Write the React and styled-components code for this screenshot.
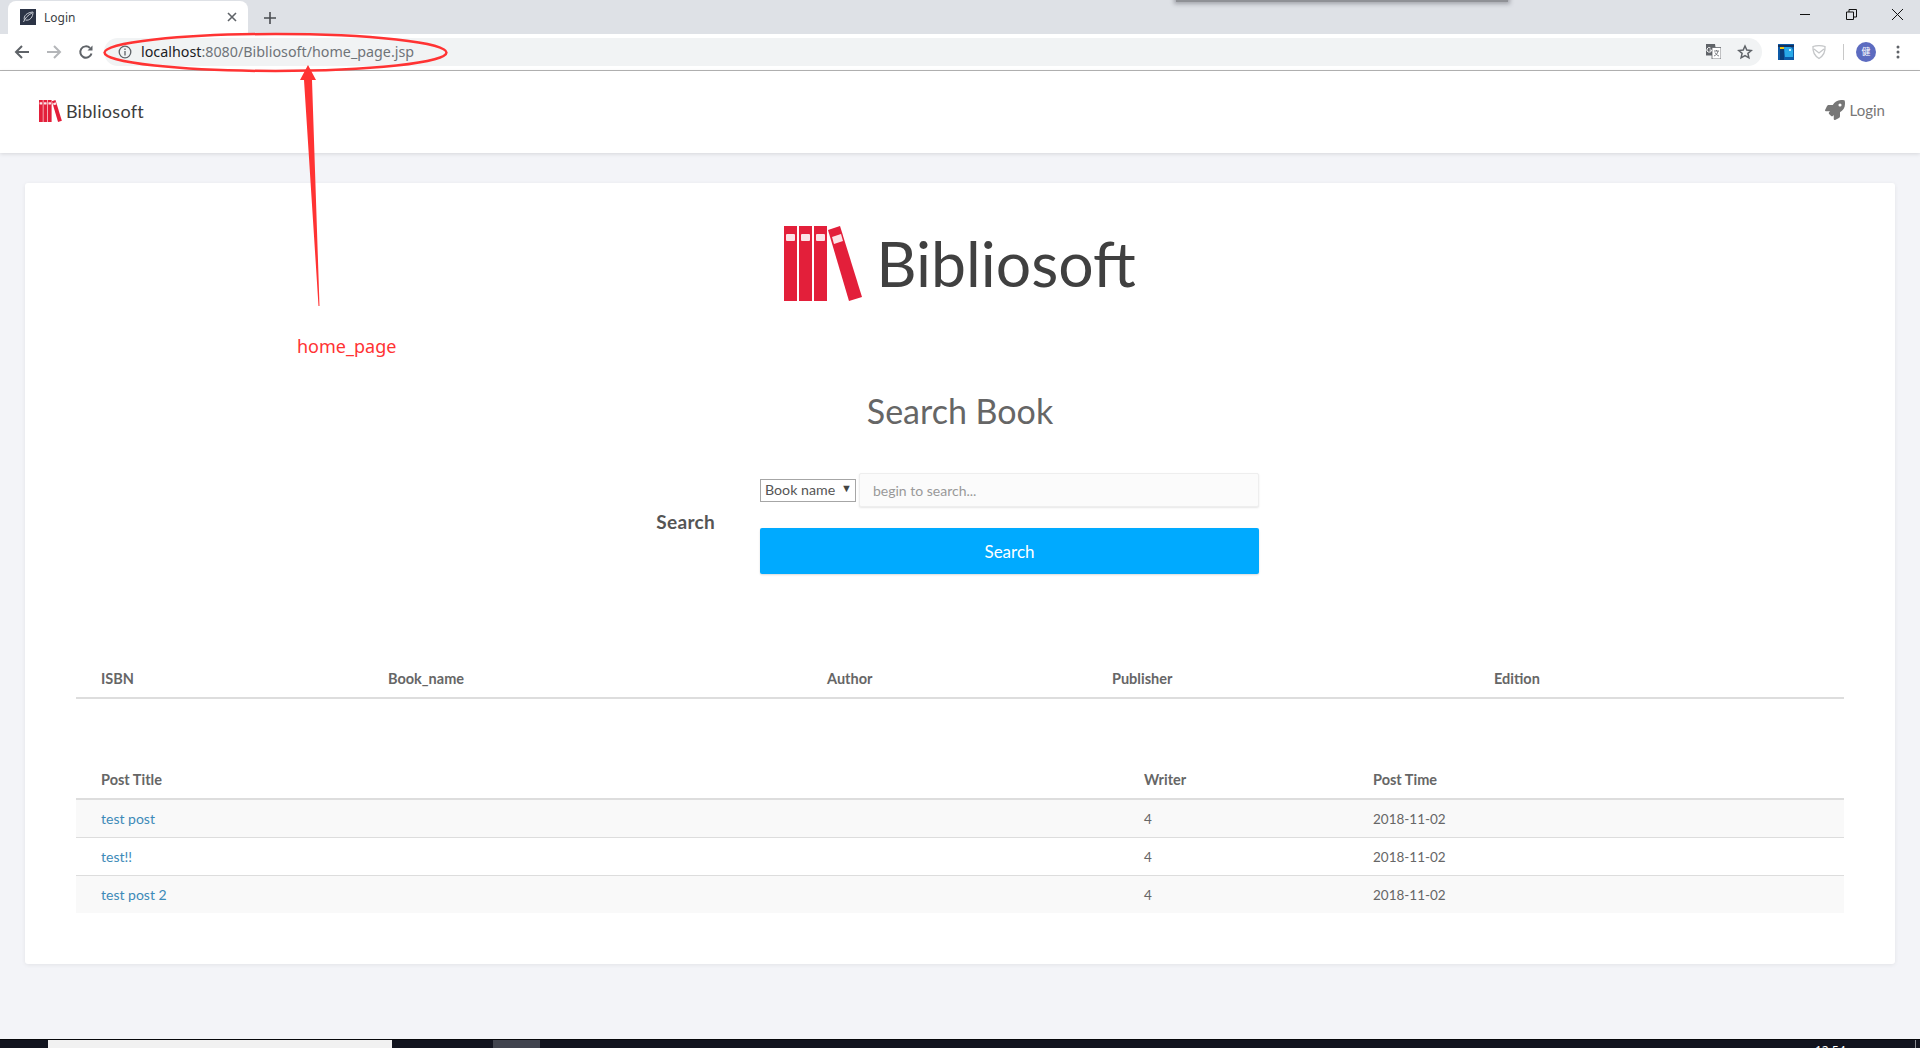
import React from 'react'
import styled, { createGlobalStyle } from 'styled-components'
import { FaRocket } from 'react-icons/fa'

const GlobalStyle = createGlobalStyle`
  html, body { margin: 0; padding: 0; height: 100%; }
  body { background: #f3f4f8; font-family: Lato, "Noto Sans", sans-serif; overflow: hidden; }
  * { box-sizing: border-box; }
`

const Page = styled.div`
  position: relative;
  display: flex;
  flex-direction: column;
  height: 100vh;
  overflow: hidden;
`

/* browser frame */
const TabStrip = styled.div`
  position: relative;
  flex: 0 0 34px;
  display: flex;
  align-items: flex-end;
  padding-left: 8px;
  background: #dee1e6;
`
const Tab = styled.div`
  display: flex;
  align-items: center;
  width: 240px;
  height: 33px;
  padding: 0 10px 1px 12px;
  background: #fff;
  border-radius: 8px 8px 0 0;
  color: #3c4043;
  font: 12px "Noto Sans", sans-serif;
`
const TabTitle = styled.span`
  flex: 1;
  margin-left: 8px;
`
const Favicon = styled.span`
  display: flex;
  align-items: center;
  justify-content: center;
  width: 16px;
  height: 16px;
  background: #2c3446;
`
const NewTab = styled.span`
  display: flex;
  margin-left: 15px;
  margin-bottom: 9px;
`
const WindowShadow = styled.div`
  position: absolute;
  left: 1176px;
  top: -4px;
  width: 332px;
  height: 6px;
  background: #8f9196;
  box-shadow: 0 0 4px 2px rgba(70, 70, 80, 0.4);
`
const WindowControls = styled.div`
  display: flex;
  align-items: center;
  gap: 35px;
  margin-left: auto;
  margin-right: 17px;
  height: 28px;
  align-self: flex-start;
`
const Toolbar = styled.div`
  flex: 0 0 37px;
  display: flex;
  align-items: center;
  padding: 0 0 1px 14px;
  background: #fff;
  border-bottom: 1px solid #b4b4b4;
`
const NavIcon = styled.span`
  display: flex;
  width: 16px;
  margin-right: 16px;
`
const Omnibox = styled.div`
  display: flex;
  align-items: center;
  flex: 0 0 1658px;
  height: 28px;
  margin-left: -6px;
  padding: 0 9px 0 14px;
  background: #f1f3f4;
  border-radius: 14px;
  font: 14.3px "Noto Sans", sans-serif;
`
const UrlHost = styled.span`
  margin-left: 9px;
  color: #202124;
`
const UrlPath = styled.span`
  color: #6f7479;
`
const OmniActions = styled.div`
  display: flex;
  align-items: center;
  gap: 16px;
  margin-left: auto;
`
const Extensions = styled.div`
  display: flex;
  align-items: center;
  margin-left: 16px;
`
const ShieldSlot = styled.span`
  display: flex;
  width: 16px;
  margin-left: 17px;
`
const Divider = styled.span`
  width: 1px;
  height: 16px;
  margin: 0 12px 0 16px;
  background: #c8c8c8;
`
const Avatar = styled.span`
  display: flex;
  align-items: center;
  justify-content: center;
  width: 20px;
  height: 20px;
  border-radius: 50%;
  background: #5c6bc0;
  color: #fff;
  font: 9px "Noto Sans CJK SC", sans-serif;
`
const Dots = styled.span`
  display: flex;
  margin-left: 20px;
`

/* site */
const Navbar = styled.header`
  position: relative;
  flex: 0 0 82px;
  display: flex;
  align-items: center;
  justify-content: space-between;
  padding: 0 35px 2px 39px;
  background: #fff;
  box-shadow: 0 1px 4px rgba(0, 0, 0, 0.12);
`
const Brand = styled.div`
  display: flex;
  align-items: center;
  gap: 4px;
  color: #3d3d3d;
  font-size: 18px;
  letter-spacing: 0.3px;
`
const LoginLink = styled.a`
  display: flex;
  align-items: center;
  gap: 5px;
  margin-bottom: 2px;
  color: #777;
  font-size: 15px;
`
const Main = styled.main`
  flex: 1;
  padding: 30px 25px 0;
`
const Card = styled.section`
  height: 781px;
  padding: 42px 51px 0;
  background: #fff;
  border-radius: 3px;
  box-shadow: 0 1px 4px rgba(0, 0, 0, 0.07);
`
const HeroLogo = styled.div`
  display: flex;
  align-items: center;
  justify-content: center;
  gap: 14px;
  height: 76px;
  color: #404040;
  font-size: 62.5px;
  line-height: 78px;
`
const Heading = styled.h2`
  margin: 87px 0 0;
  color: #666;
  font-size: 34px;
  font-weight: 400;
  line-height: 46px;
  text-align: center;
`
const SearchForm = styled.form`
  display: grid;
  grid-template-columns: 639px 499px;
  column-gap: 45px;
  margin-top: 39px;
`
const SearchLabel = styled.label`
  align-self: center;
  margin-bottom: 5px;
  color: #555;
  font-size: 19px;
  font-weight: 700;
  letter-spacing: 0.3px;
  text-align: right;
`
const Controls = styled.div`
  display: flex;
  flex-direction: column;
  gap: 21px;
`
const ControlRow = styled.div`
  display: flex;
  align-items: center;
  gap: 3px;
`
const FieldSelect = styled.div`
  position: relative;
  width: 96px;
  height: 23px;
  padding-left: 4px;
  background: #fff;
  border: 1px solid #a6a6a6;
  color: #555;
  font-size: 14.2px;
  line-height: 20px;
  &::after {
    content: '▼';
    position: absolute;
    right: 3px;
    top: -2px;
    font-size: 11px;
    color: #444;
  }
`
const SearchInput = styled.input`
  width: 400px;
  height: 34px;
  padding: 0 13px;
  background: #fbfbfb;
  border: 1px solid #eee;
  border-radius: 2px;
  box-shadow: 0 1px 2px rgba(0, 0, 0, 0.1);
  font: 14px Lato, sans-serif;
  &::placeholder { color: #999; }
`
const SearchButton = styled.button`
  height: 46px;
  background: #00aaff;
  border: 0;
  border-radius: 2px;
  box-shadow: 0 1px 2px rgba(0, 0, 0, 0.15);
  color: #fff;
  font: 17px Lato, sans-serif;
`
const Table = styled.table`
  width: 100%;
  margin-top: ${p => p.$top}px;
  border-collapse: collapse;
  table-layout: fixed;
  font-size: 13.5px;
  color: #666;
`
const Col = styled.col`
  width: ${p => p.$w}px;
`
const Th = styled.th`
  height: 38px;
  padding: 0 25px;
  border-bottom: 2px solid #ddd;
  color: #666;
  font-size: 14.5px;
  font-weight: 700;
  text-align: left;
`
const Tr = styled.tr`
  background: ${p => (p.$odd ? '#f9f9f9' : '#fff')};
`
const Td = styled.td`
  height: 38px;
  padding: 1px 25px 0;
  border-top: ${p => (p.$first ? '0' : '1px solid #ddd')};
`
const PostLink = styled.a`
  color: #3d8ab8;
  font-size: 14px;
`
const Taskbar = styled.footer`
  position: relative;
  flex: 0 0 9px;
  display: flex;
  background: #12141f;
  border-top: 1px solid #05060a;
`
const TaskSlot = styled.span`
  height: 8px;
  width: ${p => p.$w}px;
  margin-left: ${p => p.$gap}px;
  background: ${p => p.$bg};
`
const Clock = styled.span`
  position: absolute;
  left: 1815px;
  top: 2px;
  color: #fff;
  font: 12px "Noto Sans", sans-serif;
`
const DesktopEdge = styled.span`
  position: absolute;
  right: 4px;
  top: 0;
  width: 1px;
  height: 8px;
  background: #8a8c92;
`

/* annotation drawn over the page */
const Annotation = styled.svg`
  position: absolute;
  left: 0;
  top: 0;
  width: 460px;
  height: 320px;
  pointer-events: none;
`
const AnnotationText = styled.span`
  position: absolute;
  left: 297px;
  top: 334px;
  color: #ff3333;
  font: 18px "Noto Sans", sans-serif;
`

const Books = ({ height }) => (
  <svg width={height * 78 / 75} height={height} viewBox='0 0 78 75'>
    <g fill='#e31f3a'>
      <rect x='0' y='0' width='13' height='75' />
      <rect x='15' y='0' width='13' height='75' />
      <rect x='30' y='0' width='13' height='75' />
      <polygon points='44,4 56,0 78,71 65,75' />
    </g>
    <g fill='#fbe3e6'>
      <rect x='2' y='8' width='9' height='7' rx='1' />
      <rect x='17' y='8' width='9' height='7' rx='1' />
      <rect x='32' y='8' width='9' height='7' rx='1' />
      <polygon points='48,11 57,8 59,15 50,18' />
    </g>
  </svg>
)

const Line = ({ d, color = '#5f6368', w = 2, size = 16, box = 16 }) => (
  <svg width={size} height={size} viewBox={`0 0 ${box} ${box}`} fill='none' stroke={color} strokeWidth={w}>
    <path d={d} />
  </svg>
)

const books = [['ISBN', 287], ['Book_name', 439], ['Author', 285], ['Publisher', 382], ['Edition', 375]]
const posts = [['test post', '4', '2018-11-02'], ['test!!', '4', '2018-11-02'], ['test post 2', '4', '2018-11-02']]

export default function App () {
  return (
    <Page>
      <GlobalStyle />
      <TabStrip>
        <Tab>
          <Favicon>
            <svg width='12' height='12' viewBox='0 0 12 12' fill='none' stroke='#c7cbd3' strokeWidth='1'>
              <path d='M1.5 11 C3 7 6 4 10 2 M2.5 9 C1 5 5 1.5 11 1 C11 6 8 10 3.5 9' />
            </svg>
          </Favicon>
          <TabTitle>Login</TabTitle>
          <Line d='M2 2 L10 10 M10 2 L2 10' size={12} box={12} w={1.6} color='#5f6368' />
        </Tab>
        <NewTab><Line d='M7 1 V13 M1 7 H13' size={14} box={14} w={1.6} color='#4a4d52' /></NewTab>
        <WindowShadow />
        <WindowControls>
          <Line d='M0 5.5 H10' size={11} box={11} w={1} color='#111' />
          <Line d='M0.5 3 H7.5 V10.5 H0.5 Z M3 3 V0.5 H10.5 V8 H7.5' size={11} box={11} w={1} color='#111' />
          <Line d='M0 0 L11 11 M11 0 L0 11' size={11} box={11} w={1} color='#111' />
        </WindowControls>
      </TabStrip>

      <Toolbar>
        <NavIcon><Line d='M15 8 H2 M8 2 L2 8 L8 14' /></NavIcon>
        <NavIcon><Line d='M1 8 H14 M8 2 L14 8 L8 14' color='#b4b6b9' /></NavIcon>
        <NavIcon>
          <svg width='16' height='16' viewBox='0 0 16 16' fill='none' stroke='#5f6368' strokeWidth='2'>
            <path d='M13.5 9.5 A5.7 5.7 0 1 1 12 4' />
            <path d='M14.5 1.5 V6.5 H9.5 Z' fill='#5f6368' stroke='none' />
          </svg>
        </NavIcon>
        <Omnibox>
          <svg width='14' height='14' viewBox='0 0 14 14' fill='none' stroke='#5f6368' strokeWidth='1.3'>
            <circle cx='7' cy='7' r='5.8' />
            <path d='M7 6 V10.5 M7 3.5 V5' />
          </svg>
          <UrlHost>localhost</UrlHost>
          <UrlPath>:8080/Bibliosoft/home_page.jsp</UrlPath>
          <OmniActions>
            <svg width='15' height='15' viewBox='0 0 15 15'>
              <path d='M0 0 H9 L10.5 3 H15 V15 H6 L5 11.5 H0 Z' fill='#fff' />
              <path d='M0 0 H9 L11 11.5 H0 Z' fill='#5f6368' />
              <path d='M6 3.5 H15 V15 H6 Z' fill='#fff' stroke='#5f6368' strokeWidth='0.8' />
              <path d='M4.5 4 A2.3 2.3 0 1 0 5.5 6 H3.5' stroke='#fff' strokeWidth='1' fill='none' />
              <path d='M8 7 H13 M10.5 6 V7 M12 7 C11.5 10 10 11 8 12 M9 8.5 C10 10.5 11.5 11.5 13 12' stroke='#5f6368' strokeWidth='0.8' fill='none' />
            </svg>
            <svg width='16' height='16' viewBox='0 0 16 16' fill='none' stroke='#5f6368' strokeWidth='1.5'>
              <path d='M8 2 L9.8 6.1 L14.3 6.5 L10.9 9.4 L11.9 13.8 L8 11.5 L4.1 13.8 L5.1 9.4 L1.7 6.5 L6.2 6.1 Z' />
            </svg>
          </OmniActions>
        </Omnibox>
        <Extensions>
          <svg width='16' height='16' viewBox='0 0 16 16'>
            <rect width='16' height='16' fill='#0d5aa7' />
            <path d='M0 3 H16 V1 H0 Z' fill='#12315f' />
            <path d='M2 16 V4 H6 V16 Z' fill='#0b3d7a' />
            <path d='M6 3 H11 C14 3 15 5 15 7 V13 H7 Z' fill='#29a9e8' />
            <circle cx='12' cy='6' r='1' fill='#fff' />
            <path d='M2 3 H6 V5 H2 Z' fill='#f2c811' />
          </svg>
          <ShieldSlot>
            <svg width='16' height='16' viewBox='0 0 16 16' fill='none' stroke='#c4c6c8' strokeWidth='1.3'>
              <path d='M2 2.5 C5 1.5 11 1.5 14 2.5 C14.5 8 12 12 8 14.5 C4 12 1.5 8 2 2.5 Z M3 5 L8 9 L13 5' />
            </svg>
          </ShieldSlot>
          <Divider />
          <Avatar>健</Avatar>
          <Dots>
            <svg width='4' height='14' viewBox='0 0 4 14' fill='#5f6368'>
              <circle cx='2' cy='2' r='1.5' /><circle cx='2' cy='7' r='1.5' /><circle cx='2' cy='12' r='1.5' />
            </svg>
          </Dots>
        </Extensions>
      </Toolbar>

      <Navbar>
        <Brand><Books height={22} />Bibliosoft</Brand>
        <LoginLink><FaRocket size={20} />Login</LoginLink>
      </Navbar>

      <Main>
        <Card>
          <HeroLogo><Books height={75} />Bibliosoft</HeroLogo>
          <Heading>Search Book</Heading>
          <SearchForm>
            <SearchLabel>Search</SearchLabel>
            <Controls>
              <ControlRow>
                <FieldSelect>Book name</FieldSelect>
                <SearchInput placeholder='begin to search...' />
              </ControlRow>
              <SearchButton type='button'>Search</SearchButton>
            </Controls>
          </SearchForm>

          <Table $top={86}>
            <colgroup>{books.map(([name, w]) => <Col key={name} $w={w} />)}</colgroup>
            <thead><tr>{books.map(([name]) => <Th key={name}>{name}</Th>)}</tr></thead>
          </Table>

          <Table $top={62}>
            <colgroup><Col $w={1043} /><Col $w={229} /><Col $w={496} /></colgroup>
            <thead><tr><Th>Post Title</Th><Th>Writer</Th><Th>Post Time</Th></tr></thead>
            <tbody>
              {posts.map(([title, writer, time], i) => (
                <Tr key={title} $odd={i % 2 === 0}>
                  <Td $first={i === 0}><PostLink>{title}</PostLink></Td>
                  <Td $first={i === 0}>{writer}</Td>
                  <Td $first={i === 0}>{time}</Td>
                </Tr>
              ))}
            </tbody>
          </Table>
        </Card>
      </Main>

      <Taskbar>
        <TaskSlot $w={344} $gap={48} $bg='#f1f1f1' />
        <TaskSlot $w={47} $gap={101} $bg='#41444e' />
        <Clock>12:54</Clock>
        <DesktopEdge />
      </Taskbar>

      <Annotation viewBox='0 0 460 320'>
        <ellipse cx='275.5' cy='52.5' rx='171' ry='18.5' fill='none' stroke='#ff3333' strokeWidth='2.5' />
        <polygon points='308,65 316,80 312,80 319.5,306 318.5,306 304,80 300,80' fill='#ff3333' />
      </Annotation>
      <AnnotationText>home_page</AnnotationText>
    </Page>
  )
}
